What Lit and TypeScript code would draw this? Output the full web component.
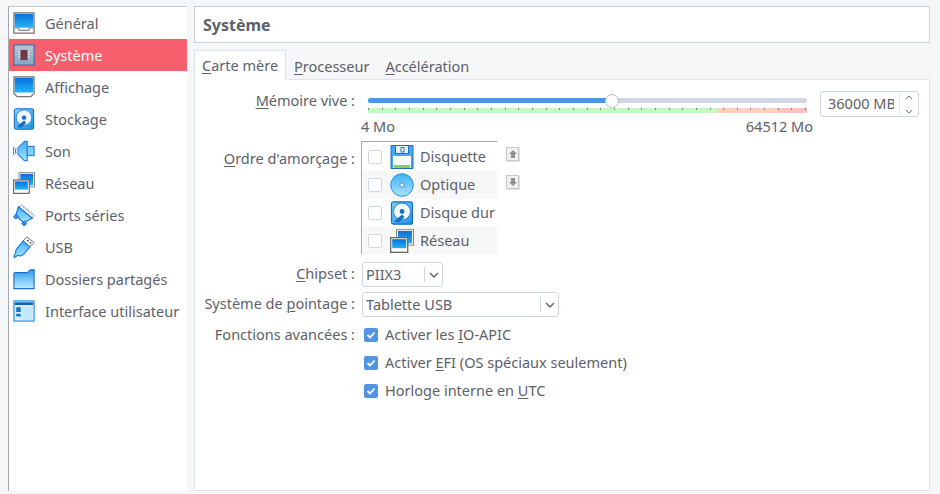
import { LitElement, html, css, svg } from "lit";
import { customElement } from "lit/decorators.js";

const defs = svg`<svg width="0" height="0" style="position:absolute"><defs>
<linearGradient id="scr" x1="0" y1="0" x2="0" y2="1"><stop offset="0" stop-color="#0a6fd8"/><stop offset="1" stop-color="#22b4fb"/></linearGradient>
<linearGradient id="lb" x1="0" y1="0" x2="0" y2="1"><stop offset="0" stop-color="#3fb0f8"/><stop offset="1" stop-color="#a8e4ff"/></linearGradient>
<linearGradient id="fold" x1="0" y1="0" x2="0" y2="1"><stop offset="0" stop-color="#2f9fee"/><stop offset="1" stop-color="#bdeaff"/></linearGradient>
<linearGradient id="chipbg" x1="0" y1="0" x2="0" y2="1"><stop offset="0" stop-color="#bcc8d6"/><stop offset="1" stop-color="#7fa6c8"/></linearGradient>
<linearGradient id="disk" x1="0" y1="0" x2="1" y2="1"><stop offset="0" stop-color="#7fd6ff"/><stop offset="1" stop-color="#1c8fe6"/></linearGradient>
</defs></svg>`;

const monitor = html`<svg class="ic" viewBox="0 0 24 24"><path d="M1 1h22v22H1z" fill="#fff" stroke="#777" stroke-width="1.400"/><path d="M2 2h20v15H2z" fill="url(#scr)"/><path d="M1.500 17.500h5v2.500h11v-2.500h5" fill="none" stroke="#888" stroke-width="1.200"/></svg>`;
const display = html`<svg class="ic" viewBox="0 0 24 24"><path d="M1 1h22v18l-3.500 3.500h-15L1 19z" fill="#fff" stroke="#777" stroke-width="1.400"/><path d="M2 2h20v16H2z" fill="url(#scr)"/></svg>`;
const chip = html`<svg class="ic" viewBox="0 0 24 24"><rect x="1" y="1" width="22" height="22" fill="url(#chipbg)" stroke="#4a68b0" stroke-width="1.300"/><rect x="8" y="6.500" width="8" height="11" fill="#6b3a44"/><path d="M6 7.500h2M6 9.500h2M6 11.500h2M6 13.500h2M6 15.500h2M16 7.500h2M16 9.500h2M16 11.500h2M16 13.500h2M16 15.500h2" stroke="#efe6e6" stroke-width="1"/></svg>`;
const hdd = html`<svg class="ic" viewBox="0 0 24 24"><rect x="1.500" y="0.800" width="21" height="22.400" rx="2" fill="url(#disk)" stroke="#1a6cc4" stroke-width="1.200"/><circle cx="12" cy="10.500" r="8.500" fill="#eef9ff" stroke="#2a80d8"/><circle cx="12" cy="10.500" r="2.400" fill="#1a6cc4"/><path d="M4 20.500l8-7 2.500 2.500-5.500 5.500z" fill="#1a6cc4"/></svg>`;
const speaker = html`<svg class="ic" viewBox="0 0 24 24"><path d="M5.500 8.500l7-7h3v21h-3l-7-7z" fill="url(#lb)" stroke="#2a80d8" stroke-width="1.200"/><rect x="15.500" y="7" width="7.500" height="10" fill="#7ed0ff" stroke="#2a80d8" stroke-width="1.200"/><path d="M3.500 9q-1.500 3 0 6M1.300 7.500q-2 4.500 0 9" fill="none" stroke="#2a80d8" stroke-width="1.200"/></svg>`;
const net = html`<svg class="ic" viewBox="0 0 24 24"><rect x="6.500" y="0.700" width="17" height="15.500" fill="#fff" stroke="#808080" stroke-width="1"/><rect x="8" y="2" width="14" height="12.500" fill="url(#scr)"/><rect x="0.700" y="8.700" width="17" height="14.600" fill="#fff" stroke="#666" stroke-width="1.300"/><rect x="2.200" y="10.200" width="14" height="9" fill="url(#scr)"/></svg>`;
const serial = html`<svg class="ic" viewBox="0 0 24 24"><path d="M9 0.500l14.500 12-3 3.500L6 4z" fill="#f6f8fa" stroke="#8aa8c8"/><path d="M10.500 3l2 1.500M13.500 5.500l2 1.500M16.500 8l2 1.500M19.500 10.500l2 1.500" stroke="#9ab0c6"/><path d="M6 3L21 15.500 11.500 20.500 3 12z" fill="url(#lb)" stroke="#1a70d0" stroke-width="1.200"/><path d="M0.500 14l3-3 2.500 2.500-3 3zM9.500 21l3-2.500 2.500 3-3 2.500z" fill="#2a90e8" stroke="#1a70d0"/></svg>`;
const usb = html`<svg class="ic" viewBox="0 0 24 24"><path d="M15 1l8 6-4.500 5L11 5.500z" fill="#fff" stroke="#666"/><path d="M15.500 4.500l1.500 1.200M18.500 6.800l1.500 1.200" stroke="#444" stroke-width="1.500"/><path d="M11 5.500L18.500 12 11 20.500Q8 22.500 5.500 21L1.500 23.500Q0.500 22 3 19 2.500 16.500 4 14z" fill="url(#lb)" stroke="#1a78d8" stroke-width="1.200"/></svg>`;
const folder = html`<svg class="ic" viewBox="0 0 24 24"><path d="M1 22.500V6l1-1h14l3-3h4v20.500z" fill="url(#fold)" stroke="#1a70c8" stroke-width="1.200"/></svg>`;
const win = html`<svg class="ic" viewBox="0 0 24 24"><rect x="1" y="1" width="22" height="22" fill="#d8f0ff" stroke="#2a90e8" stroke-width="1.300"/><rect x="2" y="2.500" width="20" height="3" fill="#1a60a8"/><path d="M10 7.500h11v14H10z" fill="#bfe8ff"/><path d="M3.500 8h5v5h-5zM3.500 15h5v3h-5z" fill="#1a70c8"/></svg>`;
const floppy = html`<svg class="ic" viewBox="0 0 24 24"><path d="M1 0.500h22v23H1z" fill="#4aa8f0" stroke="#1a70c8"/><rect x="5.500" y="0.500" width="13" height="8" fill="#e6f4ff" stroke="#1a70c8"/><rect x="11" y="2.500" width="3" height="4.500" fill="none" stroke="#3a7ab8"/><rect x="3" y="11" width="18" height="12" fill="#f4fbff"/><rect x="3.500" y="20" width="17" height="3" fill="#8ed04a"/></svg>`;
const optical = html`<svg class="ic" viewBox="0 0 24 24"><circle cx="12" cy="12" r="11.300" fill="url(#lb)" stroke="#2a90e8"/><circle cx="12" cy="12" r="2.200" fill="#e8f6ff" stroke="#4a8ac8"/></svg>`;

const items: [unknown, string][] = [
  [monitor, "Général"], [chip, "Système"], [display, "Affichage"], [hdd, "Stockage"], [speaker, "Son"],
  [net, "Réseau"], [serial, "Ports séries"], [usb, "USB"], [folder, "Dossiers partagés"], [win, "Interface utilisateur"],
];
const boot: [unknown, string][] = [[floppy, "Disquette"], [optical, "Optique"], [hdd, "Disque dur"], [net, "Réseau"]];

const chevron = html`<svg class="chev" viewBox="0 0 10 6"><path d="M1 1l4 4 4-4" fill="none" stroke="#5c616c" stroke-width="1.400"/></svg>`;
const ticks = Array.from({ length: 33 }, (_, i) => i);

@customElement("app-root")
export class AppRoot extends LitElement {
  static styles = css`
    :host { display: block; width: 940px; height: 494px; background: #f5f6f7; color: #5c616c;
      font: 14.5px/18px "Noto Sans", sans-serif; overflow: hidden; }
    * { box-sizing: border-box; }
    u { text-decoration-thickness: 1px; text-underline-offset: 2px; }
    .root { display: flex; gap: 7px; height: 494px; padding: 6px 10px 3px 8px; }
    .side { width: 179px; background: #fff; border-left: 1px solid #a4a8b0; border-top: 1px solid #c4c6cc; }
    .item { display: flex; align-items: center; height: 32px; padding-left: 4px; gap: 10px; white-space: nowrap; }
    .item.sel { background: #f65f6b; color: #fff; }
    .ic { width: 22px; height: 22px; flex: none; display: block; }
    .main { flex: 1; display: flex; flex-direction: column; min-width: 0; }
    .head { height: 37px; background: #fff; border: 1px solid #cfd0d2; display: flex; align-items: center;
      padding-left: 8px; font-weight: 700; font-size: 16px; }
    .tabs { display: flex; margin-top: 7px; height: 30px; position: relative; z-index: 1; }
    .tab { padding: 7px 8px 0; }
    .tab.on { background: #fff; border: 1px solid #dde3e9; border-bottom: none; padding: 5px 7px 0; width: 92px; white-space: nowrap; }
    .pane { flex: 1; background: #fff; border: 1px solid #dde3e9; margin-top: -1px; padding-top: 11px; }
    .row { display: flex; }
    .lab { width: 160px; text-align: right; flex: none; white-space: nowrap; margin-right: 7px; }
    .mem { height: 26px; }
    .mem .lab { line-height: 18px; }
    .slider { width: 439px; margin-left: 6px; margin-right: 13px; position: relative; height: 26px; }
    .track { position: absolute; left: 0; right: 0; top: 7px; height: 5px; border-radius: 3px; background: #cfd6e6; }
    .fill { position: absolute; left: 0; top: 0; bottom: 0; border-radius: 3px; background: #5294e2; }
    .knob { position: absolute; top: 3px; width: 14px; height: 14px; border-radius: 50%; background: #fbfbfc; border: 1px solid #b8bcc6; }
    .scale { position: absolute; left: 0; right: 0; top: 17px; height: 5px; display: flex; }
    .seg { height: 5px; }
    .tick { position: absolute; top: 0; width: 1px; height: 2px; background: #7a8a80; }
    .spin { width: 99px; height: 26px; border: 1px solid #cfd6e6; border-radius: 3px; display: flex; background: #fff; }
    .spin .v { width: 78px; padding: 2px 5px 0 7px; flex: none; }
    .spin .clip { overflow: hidden; white-space: nowrap; }
    .spin .b { flex: 1; border-left: 1px solid #e4e7ee; display: flex; flex-direction: column; align-items: center; justify-content: center; gap: 9px; }
    .spin svg { width: 8px; height: 5px; display: block; }
    .range { display: flex; justify-content: space-between; height: 24px; margin-left: 166px; width: 452px; line-height: 18px; }
    .bootlab { padding-top: 8px; }
    .list { width: 136px; height: 113px; overflow: hidden; border-left: 1px solid #a4a8b0; border-top: 1px solid #a4a8b0; padding-top: 1px; margin-left: -1px; }
    .bi { height: 28px; display: flex; align-items: center; padding-left: 6px; gap: 7px; white-space: nowrap; }
    .bi span { padding-bottom: 2px; }
    .bi:nth-child(even) { background: #f7f7f8; }
    .cb { width: 14px; height: 14px; border: 1px solid #cfd6e6; border-radius: 2px; background: #fff; flex: none; }
    .bi .ic { width: 24px; height: 24px; margin: 0 -1px 0 1px; }
    .arrows { display: flex; flex-direction: column; gap: 14px; margin: 6px 0 0 9px; }
    .ab { width: 13px; height: 14px; border: 1px solid #c8c8c8; background: #f0f0f0; display: flex; align-items: center; justify-content: center; box-shadow: 1px 1px 0 #e0e0e0; }
    .ab svg { width: 10px; height: 10px; }
    .combo { height: 25px; border: 1px solid #cfd6e6; border-radius: 3px; background: #fff; display: flex; align-items: center; padding-left: 3px; white-space: nowrap; }
    .combo span { padding-bottom: 2px; }
    .combo .sep { margin-left: auto; width: 18px; height: 15px; border-left: 1px solid #cfd6e6; display: flex; align-items: center; justify-content: center; }
    .chev { width: 10px; height: 6px; display: block; }
    .c1 { margin-top: 8px; }
    .c2 { margin-top: 5px; }
    .cl { line-height: 22px; }
    .cr { margin-top: 4px; }
    .crow { height: 28px; align-items: center; }
    .crow .lab, .crow .txt { padding-bottom: 2px; }
    .check { width: 14px; height: 14px; border-radius: 2px; background: #5294e2; margin: 0 7px 0 2px; flex: none; display: flex; align-items: center; justify-content: center; }
    .check svg { width: 10px; height: 10px; display: block; }
  `;

  render() {
    const checkIcon = html`<svg viewBox="0 0 10 10"><path d="M1.500 5l2.500 2.500 4.500-5" fill="none" stroke="#fff" stroke-width="1.800"/></svg>`;
    const check = (body: unknown, lab?: unknown) => html`<div class="row crow"><div class="lab">${lab ?? ""}</div><div class="check">${checkIcon}</div><div class="txt">${body}</div></div>`;
    return html`${defs}
    <div class="root">
      <div class="side">
        ${items.map(([ic, t], i) => html`<div class="item ${i === 1 ? "sel" : ""}">${ic}<span>${t}</span></div>`)}
      </div>
      <div class="main">
        <div class="head">Système</div>
        <div class="tabs">
          <div class="tab on"><u>C</u>arte mère</div>
          <div class="tab"><u>P</u>rocesseur</div>
          <div class="tab"><u>A</u>ccélération</div>
        </div>
        <div class="pane">
          <div class="row mem">
            <div class="lab"><u>M</u>émoire vive :</div>
            <div class="slider">
              <div class="track"><div class="fill" style="width:245px"></div></div>
              <div class="scale">
                <div class="seg" style="width:349px;background:#c3fbc0"></div>
                <div class="seg" style="width:60px;background:#ffd0bd"></div>
                <div class="seg" style="width:30px;background:#ffc0c0"></div>
                ${ticks.map((i) => html`<div class="tick" style="left:${Math.round(i * 13.66)}px"></div>`)}
              </div>
              <div class="knob" style="left:237px"></div>
            </div>
            <div class="spin"><div class="v"><div class="clip">36000 MB</div></div><div class="b">
              <svg viewBox="0 0 10 6"><path d="M1 5l4-4 4 4" fill="none" stroke="#5c616c" stroke-width="1.200"/></svg>
              <svg viewBox="0 0 10 6"><path d="M1 1l4 4 4-4" fill="none" stroke="#5c616c" stroke-width="1.200"/></svg>
            </div></div>
          </div>
          <div class="range"><span>4 Mo</span><span>64512 Mo</span></div>
          <div class="row">
            <div class="lab bootlab"><u>O</u>rdre d'amorçage :</div>
            <div class="list">
              ${boot.map(([ic, t]) => html`<div class="bi"><div class="cb"></div>${ic}<span>${t}</span></div>`)}
            </div>
            <div class="arrows">
              <div class="ab"><svg viewBox="0 0 10 10"><path d="M5 1l4 4H7v4H3V5H1z" fill="#909090"/></svg></div>
              <div class="ab"><svg viewBox="0 0 10 10"><path d="M5 9l4-4H7V1H3v4H1z" fill="#909090"/></svg></div>
            </div>
          </div>
          <div class="row c1">
            <div class="lab cl"><u>C</u>hipset :</div>
            <div class="combo" style="width:81px"><span>PIIX3</span><div class="sep">${chevron}</div></div>
          </div>
          <div class="row c2">
            <div class="lab cl">Système de <u>p</u>ointage :</div>
            <div class="combo" style="width:197px"><span>Tablette USB</span><div class="sep">${chevron}</div></div>
          </div>
          <div class="cr">
            ${check(html`Activer les <u>I</u>O-APIC`, "Fonctions avancées :")}
            ${check(html`Activer <u>E</u>FI (OS spéciaux seulement)`)}
            ${check(html`Horloge interne en <u>U</u>TC`)}
          </div>
        </div>
      </div>
    </div>`;
  }
}
